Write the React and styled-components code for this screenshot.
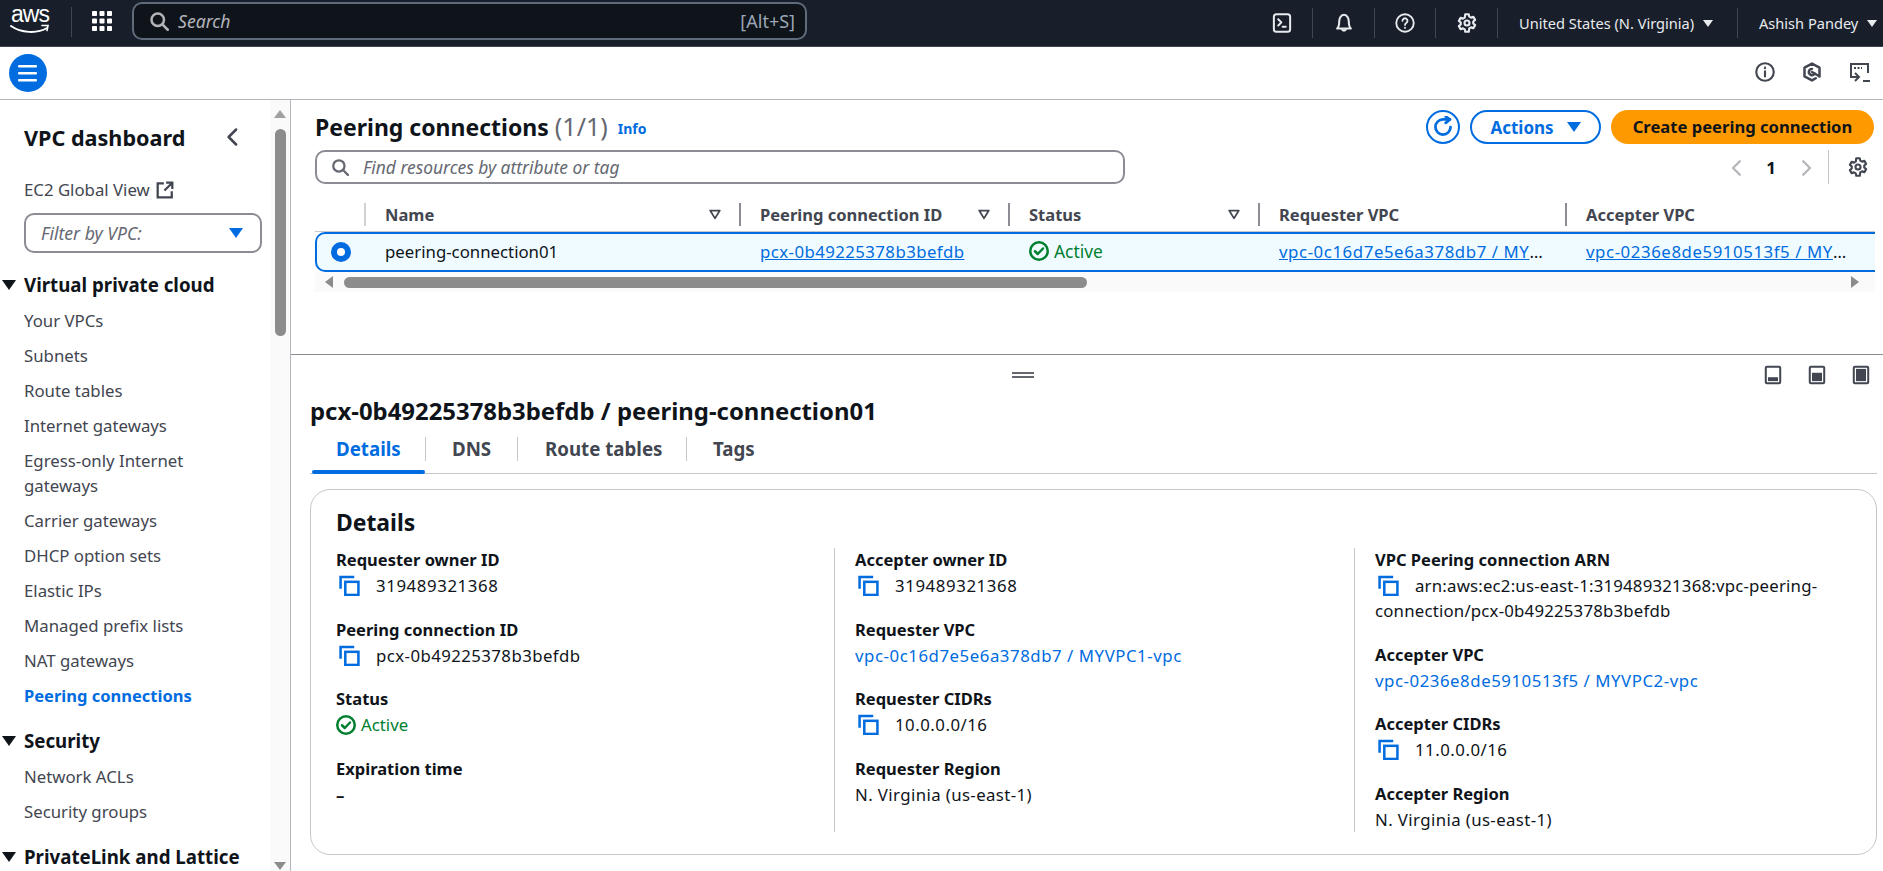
import React from "react";
import styled, { createGlobalStyle } from "styled-components";

const Global = createGlobalStyle`
  html, body { margin: 0; padding: 0; height: 871px; overflow: hidden; background: #fff; }
  body { font-family: "Noto Sans", "Open Sans", sans-serif; font-size: 16.8px; color: #0f141a; }
  * { box-sizing: border-box; }
`;

const Page = styled.div`width: 1883px; height: 871px; display: flex; flex-direction: column; overflow: hidden;`;
const TopBar = styled.header`height: 47px; background: #181f2b; border-bottom: 1px solid #414750; display: flex; align-items: center; color: #fff; flex: none;`;
const LogoBox = styled.div`width: 71px; align-self: flex-start; padding-left: 10px; display: flex; flex-direction: column;`;
const LogoText = styled.span`font-family: "Liberation Sans", sans-serif; font-size: 23px; line-height: 28px; letter-spacing: -1px; padding-left: 1px;`;
const LogoSmile = styled.svg`margin-top: -4px;`;
const BarDivider = styled.span`width: 1px; height: 30px; background: #414750; margin-bottom: 2px;`;
const GridWrap = styled.div`width: 60px; display: flex; justify-content: center; color: #fff; margin-bottom: 4px;`;
const SearchBox = styled.div`width: 675px; height: 38px; margin-bottom: 4px; background: #0f141a; border: 2px solid #5f6b7a; border-radius: 10px; display: flex; align-items: center; padding: 0 10px 0 15px; color: #b4b4bb; gap: 9px; font-size: 17.6px;`;
const SearchHint = styled.span`font-style: italic; flex: 1;`;
const Shortcut = styled.span`font-size: 18px; color: #9ba7b6;`;
const TopRight = styled.div`margin-left: auto; display: flex; align-items: center; height: 100%;`;
const TopCell = styled.div`width: ${p => p.$w}px; height: 30px; display: flex; align-items: center; justify-content: ${p => p.$text ? "flex-start" : "center"}; padding-left: ${p => p.$text ? p.$text : 0}px; border-left: ${p => p.$first ? "none" : "1px solid #414750"}; font-size: 14.6px; gap: 9px; color: #e8ebee; white-space: nowrap;`;
const SubBar = styled.div`height: 53px; border-bottom: 1px solid #b4b4bb; display: flex; align-items: center; padding: 0 12px 0 9px; flex: none;`;
const MenuBtn = styled.div`width: 38px; height: 38px; border-radius: 50%; background: #006ce0; display: flex; align-items: center; justify-content: center;`;
const SubIcons = styled.div`margin-left: auto; display: flex; gap: 27px; color: #424650;`;
const Body = styled.div`flex: 1; display: flex; min-height: 0;`;

const Sidebar = styled.aside`width: 291px; flex: none; border-right: 1px solid #b4b4bb; display: flex; overflow: hidden;`;
const NavInner = styled.nav`width: 270px; padding: 0 0 0 24px; flex: none; color: #424650;`;
const NavHead = styled.div`display: flex; align-items: center; justify-content: space-between; height: 30px; margin-top: 22px; padding-right: 27px;`;
const NavTitle = styled.h2`margin: 0; font-size: 21.6px; font-weight: 700; color: #0f141a;`;
const GlobalLink = styled.div`margin-top: 25px; height: 25px; line-height: 25px; display: flex; align-items: center; gap: 6px;`;
const FilterBox = styled.div`margin: 11px 8px 0 0; height: 40px; border: 2px solid #8c8c94; border-radius: 10px; display: flex; align-items: center; justify-content: space-between; padding: 0 17px 0 15px; font-style: italic; color: #656871; font-size: 17.6px;`;
const SectionTitle = styled.div`position: relative; font-weight: 700; font-size: 18.7px; line-height: 25px; color: #0f141a; margin-top: ${p => p.$mt}px;`;
const SectionCaret = styled.span`position: absolute; left: -22px; top: 8px; width: 0; height: 0; border-left: 7px solid transparent; border-right: 7px solid transparent; border-top: 10px solid #0f141a;`;
const NavItem = styled.div`padding: 5px 25px 5px 0; line-height: 25px; color: ${p => p.$active ? "#006ce0" : "#424650"}; font-weight: ${p => p.$active ? 700 : 400}; font-size: ${p => p.$active ? 16.5 : 16.8}px;`;
const NavGroup = styled.div`margin-top: ${p => p.$mt || 0}px;`;
const ScrollV = styled.div`width: 20px; flex: none; background: #fafafa; display: flex; flex-direction: column; align-items: center; padding-top: 10px;`;
const ScrollThumbV = styled.div`width: 11px; height: 207px; margin-top: 11px; background: #8c8c8c; border-radius: 6px;`;
const ArrowUp = styled.span`width: 0; height: 0; border-left: 6px solid transparent; border-right: 6px solid transparent; border-bottom: 8px solid #a0a0a0;`;
const ArrowDown = styled.span`margin-top: auto; margin-bottom: 1px; width: 0; height: 0; border-left: 6px solid transparent; border-right: 6px solid transparent; border-top: 8px solid #8c8c8c;`;

const Main = styled.main`flex: 1; display: flex; flex-direction: column; min-width: 0;`;
const TopPanel = styled.section`height: 255px; flex: none; border-bottom: 1px solid #8c8c94; padding: 10px 8px 0 24px;`;
const HeaderRow = styled.div`display: flex; align-items: center; height: 34px;`;
const PageTitle = styled.h1`margin: 0; padding-bottom: 2px; font-size: 23px; font-weight: 700; white-space: nowrap;`;
const Count = styled.span`font-weight: 400; font-size: 25px; color: #656871;`;
const InfoLink = styled.a`font-size: 14px; font-weight: 700; color: #006ce0; margin-left: 10px; padding-top: 2px;`;
const Actions = styled.div`margin-left: auto; margin-right: 1px; display: flex; align-items: center; gap: 10px;`;
const RoundBtn = styled.div`width: 34px; height: 34px; border: 2px solid #006ce0; border-radius: 50%; display: flex; align-items: center; justify-content: center; color: #006ce0;`;
const OutlineBtn = styled.div`width: 131px; height: 34px; border: 2px solid #006ce0; border-radius: 17px; color: #006ce0; font-weight: 700; font-size: 17px; display: flex; align-items: center; justify-content: center; gap: 13px;`;
const BtnCaret = styled.span`width: 0; height: 0; border-left: 7px solid transparent; border-right: 7px solid transparent; border-top: 10px solid #006ce0;`;
const PrimaryBtn = styled.div`width: 263px; height: 34px; padding-bottom: 1px; border-radius: 17px; background: #ff9900; color: #0f141a; font-weight: 700; font-size: 16.6px; display: flex; align-items: center; justify-content: center;`;
const Toolbar = styled.div`display: flex; align-items: center; margin-top: 6px; height: 34px;`;
const TableSearch = styled.div`width: 810px; height: 34px; border: 2px solid #8c8c94; border-radius: 10px; display: flex; align-items: center; gap: 14px; padding-left: 14px; color: #656871; font-style: italic; font-size: 17.4px;`;
const Pager = styled.div`margin-left: auto; margin-right: 7px; display: flex; align-items: center; height: 34px; font-weight: 700; color: #0f141a;`;
const PageNum = styled.span`width: 34px; text-align: center; margin: 0 9px 0 8px;`;
const PagerSep = styled.span`width: 1px; height: 34px; background: #c6c6cd; margin: 0 19px 0 13px;`;
const PagerChevron = styled.span`color: #b4b4bb; display: flex; padding-top: 2px;`;
const PagerGear = styled.span`color: #424650; display: flex;`;
const TableGrid = styled.div`display: grid; grid-template-columns: 49px 375px 269px 250px 307px 1fr;`;
const HeadRow = styled(TableGrid)`height: 32px; margin-top: 15px; align-items: center; padding-bottom: 1px;`;
const HeadCell = styled.div`height: 23px; line-height: 23px; padding: 0 17px 1px 19px; display: flex; align-items: center; justify-content: space-between; font-weight: 700; font-size: 16.5px; color: #424650; border-left: 2px solid ${p => p.$light ? "#d0d0d5" : "#8c8c94"};`;
const HeadBlank = styled.div``;
const HeadRule = styled.div`height: 1px; background: #c6c6cd;`;
const DataRow = styled(TableGrid)`height: 40px; background: #f0fbff; border: 2px solid #006ce0; border-right: 0; border-radius: 10px 0 0 10px; align-items: center; grid-template-columns: 47px 375px 269px 250px 307px 1fr;`;
const RadioCell = styled.div`padding-left: 14px; display: flex;`;
const Radio = styled.span`width: 20px; height: 20px; border-radius: 50%; border: 6px solid #006ce0; background: #fff;`;
const DataCell = styled.div`padding: 0 0 2px 21px; white-space: nowrap; font-size: 16.8px;`;
const Link = styled.a`color: #006ce0; letter-spacing: ${p => p.$ls || 0}px; text-decoration: ${p => p.$plain ? "none" : "underline"};`;
const ScrollH = styled.div`height: 20px; background: #fafafa; display: flex; align-items: center; padding: 0 16px 0 10px;`;
const ThumbH = styled.div`width: 743px; height: 11px; margin-left: 11px; background: #8c8c8c; border-radius: 6px;`;
const ArrowLeft = styled.span`width: 0; height: 0; border-top: 6px solid transparent; border-bottom: 6px solid transparent; border-right: 8px solid #8c8c8c;`;
const ArrowRight = styled.span`margin-left: auto; width: 0; height: 0; border-top: 6px solid transparent; border-bottom: 6px solid transparent; border-left: 8px solid #8c8c8c;`;

const Bottom = styled.section`flex: 1; padding: 0 6px 0 19px; min-height: 0;`;
const Handle = styled.div`height: 36px; display: flex; align-items: center; position: relative;`;
const Grip = styled.div`margin: 3px auto 0 702px; width: 22px; height: 6px; border-top: 2px solid #656871; border-bottom: 2px solid #656871;`;
const PanelIcons = styled.div`position: absolute; right: 6px; top: 10px; display: flex; gap: 24px; color: #424650;`;
const DetailTitle = styled.h2`margin: 5px 0 0; font-size: 23.9px; line-height: 30px; font-weight: 700; white-space: nowrap;`;
const Tabs = styled.div`display: flex; height: 42px; margin-top: 6px; border-bottom: 1px solid #c6c6cd; align-items: stretch;`;
const Tab = styled.div`position: relative; display: flex; align-items: flex-start; padding-top: 4px; height: 41px; font-weight: 700; font-size: 18.7px; color: ${p => p.$active ? "#006ce0" : "#424650"}; width: ${p => p.$w}px; padding-left: ${p => p.$pl}px;
  &::after { content: ""; position: absolute; right: 0; top: 5px; height: 24px; width: 1px; background: ${p => p.$last ? "transparent" : "#c6c6cd"}; }
  ${p => p.$active && `&::before { content: ""; position: absolute; left: 2px; right: 1px; bottom: -1px; height: 4px; border-radius: 2px; background: #006ce0; }`}`;
const Card = styled.div`margin-top: 15px; height: 366px; border: 1px solid #c6c6cd; border-radius: 20px; padding: 18px 20px 0 26px;`;
const CardTitle = styled.h3`margin: 0 0 0 -1px; font-size: 22.9px; line-height: 30px; font-weight: 700;`;
const Columns = styled.div`display: grid; grid-template-columns: 499px 520px 1fr; margin: 10px 0 0 -1px; height: 282px;`;
const Column = styled.div`padding-left: ${p => p.$first ? 0 : 20}px; border-right: ${p => p.$last ? "none" : "1px solid #c6c6cd"}; display: flex; flex-direction: column; gap: 19.5px; padding-right: 20px;`;
const Field = styled.div`line-height: 25px; font-size: 16.8px;`;
const Label = styled.div`font-weight: 700; font-size: 16.5px; line-height: 24px; margin-bottom: 1px;`;
const Value = styled.div`display: flex; align-items: flex-start; letter-spacing: ${p => p.$ls || 0}px;`;
const WrapValue = styled.div`line-height: 25px; letter-spacing: 0.2px;`;
const CopyWrap = styled.span`width: 40px; padding-left: 3px; flex: none; display: inline-flex; padding-top: 2px; height: 25px; color: #006ce0; vertical-align: top;`;
const ActiveText = styled.span`display: flex; height: 25px; align-items: center; gap: 5px; color: #00802f; font-size: ${p => p.$size || 16.8}px;`;
const Dash = styled.div`height: 25px; font-weight: 700;`;

const Svg = ({ size = 20, w, h, children, sw = 2, vb }) => (
  <svg width={w || size} height={h || size} viewBox={vb || "0 0 16 16"} fill="none" stroke="currentColor" strokeWidth={sw} strokeLinecap="round" strokeLinejoin="round">{children}</svg>
);
const SearchIcon = ({ s = 20 }) => <Svg size={s}><circle cx="7" cy="7" r="5" /><path d="M10.700 10.700 15 15" /></Svg>;
const Gear = ({ s = 20 }) => (
  <Svg size={s} sw={1.7}><circle cx="8" cy="8" r="2" /><path d="M6.600 1h2.800l.4 1.900 1.400.8 1.900-.6 1.400 2.400-1.500 1.300v1.600l1.500 1.300-1.400 2.400-1.900-.6-1.400.8L9.400 15H6.600l-.4-1.900-1.400-.8-1.900.6-1.400-2.400L3 9.200V7.600L1.500 6.300l1.400-2.400 1.900.6 1.400-.8z" /></Svg>
);
const Copy = () => (
  <Svg size={21} vb="0 0 20 20" sw={2.4}><g style={{ strokeLinecap: "butt", strokeLinejoin: "miter" }}><path d="M1.500 13V2h13" /><rect x="6" y="6.500" width="12.500" height="12.500" /></g></Svg>
);
const CheckCircle = () => <Svg size={20}><circle cx="8" cy="8" r="7" /><path d="m4.800 8.200 2.200 2.200 4.200-4.400" /></Svg>;
const FilterTri = () => <Svg size={14} sw={2}><path d="M2.500 4h11L8 13z" /></Svg>;
const Caret = styled.span`display: inline-block; width: 0; height: 0; border-left: 5px solid transparent; border-right: 5px solid transparent; border-top: 7px solid #e8ebee;`;
const FilterCaret = styled.span`width: 0; height: 0; border-left: 7px solid transparent; border-right: 7px solid transparent; border-top: 10px solid #006ce0;`;

const Copyable = ({ children, ls }) => <Value $ls={ls}><CopyWrap><Copy /></CopyWrap><span>{children}</span></Value>;

const PanelIcon = ({ kind }) => (
  <svg width="20" height="20" viewBox="0 0 16 18" fill="none" stroke="currentColor" strokeWidth="1.8">
    <rect x="1.500" y="1.500" width="13" height="15" rx="1" />
    <rect x={3.5} y={kind === "top" ? 3.5 : kind === "mid" ? 7 : 11} width="9" height={kind === "top" ? 11 : kind === "mid" ? 7.5 : 3.5} fill="currentColor" stroke="none" />
  </svg>
);

const nav1 = ["Your VPCs", "Subnets", "Route tables", "Internet gateways", "Egress-only Internet gateways", "Carrier gateways", "DHCP option sets", "Elastic IPs", "Managed prefix lists", "NAT gateways"];

export default function App() {
  return (
    <Page>
      <Global />
      <TopBar>
        <LogoBox>
          <LogoText>aws</LogoText>
          <LogoSmile width="40" height="11" viewBox="0 0 40 11" fill="none" stroke="#fff" strokeWidth="2" strokeLinecap="round"><path d="M1 2c10 7 26 8 36 2" /><path d="M32 1.500h6l-1 5" strokeWidth="1.600" /></LogoSmile>
        </LogoBox>
        <BarDivider />
        <GridWrap>
          <svg width="20" height="20" viewBox="0 0 20 20" fill="#fff">
            {[0, 7.5, 15].flatMap(y => [0, 7.5, 15].map(x => <rect key={`${x}-${y}`} x={x} y={y} width="5" height="5" rx="0.8" />))}
          </svg>
        </GridWrap>
        <SearchBox>
          <SearchIcon />
          <SearchHint>Search</SearchHint>
          <Shortcut>[Alt+S]</Shortcut>
        </SearchBox>
        <TopRight>
          <TopCell $first $w={60}>
            <Svg size={20} sw={1.6}><rect x="1.500" y="1" width="13" height="14" rx="2" /><path d="m5 5 2.500 2.500L5 10M8.500 11h2.500" /></Svg>
          </TopCell>
          <TopCell $w={62}>
            <Svg size={22} sw={1.5}><path d="M3 12h10c-1.300-1.200-1.500-3-1.500-5S10.500 2 8 2 4.500 5 4.500 7 4.300 10.800 3 12z" /><path d="M6.500 12.500a1.600 1.600 0 0 0 3 0" /></Svg>
          </TopCell>
          <TopCell $w={61}>
            <Svg size={20} sw={1.5}><circle cx="8" cy="8" r="7" /><path d="M6 6.200a2 2 0 1 1 3 1.800c-.7.400-1 .8-1 1.500M8 11.700v.2" /></Svg>
          </TopCell>
          <TopCell $w={62}><Gear /></TopCell>
          <TopCell $w={240} $text={21}>United States (N. Virginia) <Caret /></TopCell>
          <TopCell $w={146} $text={21}>Ashish Pandey <Caret /></TopCell>
        </TopRight>
      </TopBar>
      <SubBar>
        <MenuBtn>
          <svg width="20" height="18" viewBox="0 0 20 18" fill="#fff"><rect y="1" width="19" height="2.500" rx="1" /><rect y="8" width="19" height="2.500" rx="1" /><rect y="15" width="19" height="2.500" rx="1" /></svg>
        </MenuBtn>
        <SubIcons>
          <Svg size={20} sw={1.7}><circle cx="8" cy="8" r="7" /><path d="M8 7.500v4M8 4.500v.4" /></Svg>
          <Svg size={20} sw={2}><path d="M11 13 8 14.700 2 11.500v-7L8 1.300l6 3.200v7" /><path d="M8 5.500a2.500 2.500 0 1 0 2.200 3.700" /><path d="M8 8l5.500 3.200" /></Svg>
          <svg width="22" height="22" viewBox="0 0 22 22" fill="none" stroke="currentColor" strokeWidth="2"><path d="M9 15H2V2h17v9" /><path d="m6 11 4 4-4 4M14 19h7" /><path d="M5 6h8" strokeDasharray="2 1.500" /></svg>
        </SubIcons>
      </SubBar>
      <Body>
        <Sidebar>
          <NavInner>
            <NavHead>
              <NavTitle>VPC dashboard</NavTitle>
              <Svg size={20} sw={2}><path d="M10.500 2 4.500 8l6 6" /></Svg>
            </NavHead>
            <GlobalLink>EC2 Global View
              <Svg size={18} sw={2}><g style={{ strokeLinecap: "butt", strokeLinejoin: "miter" }}><path d="M7 2H1.500v12.500H14V9M9 1.500h5.500V7M14.500 1.500 7.500 8.500" /></g></Svg>
            </GlobalLink>
            <FilterBox>Filter by VPC:<FilterCaret /></FilterBox>
            <SectionTitle $mt={19}><SectionCaret />Virtual private cloud</SectionTitle>
            <NavGroup $mt={6}>
              {nav1.map(t => <NavItem key={t}>{t}</NavItem>)}
              <NavItem $active>Peering connections</NavItem>
            </NavGroup>
            <SectionTitle $mt={15}><SectionCaret />Security</SectionTitle>
            <NavGroup $mt={6}>
              <NavItem>Network ACLs</NavItem>
              <NavItem>Security groups</NavItem>
            </NavGroup>
            <SectionTitle $mt={15}><SectionCaret />PrivateLink and Lattice</SectionTitle>
          </NavInner>
          <ScrollV><ArrowUp /><ScrollThumbV /><ArrowDown /></ScrollV>
        </Sidebar>
        <Main>
          <TopPanel>
            <HeaderRow>
              <PageTitle>Peering connections <Count>(1/1)</Count></PageTitle>
              <InfoLink>Info</InfoLink>
              <Actions>
                <RoundBtn>
                  <Svg size={22} sw={2}><path d="M13.500 8A5.500 5.500 0 1 1 8 2.500h5" /><path d="M10 .5 13 2.500 10 5" /></Svg>
                </RoundBtn>
                <OutlineBtn>Actions<BtnCaret /></OutlineBtn>
                <PrimaryBtn>Create peering connection</PrimaryBtn>
              </Actions>
            </HeaderRow>
            <Toolbar>
              <TableSearch><SearchIcon s={18} />Find resources by attribute or tag</TableSearch>
              <Pager>
                <PagerChevron><Svg size={18} sw={2}><path d="M10.500 2 4.500 8l6 6" /></Svg></PagerChevron>
                <PageNum>1</PageNum>
                <PagerChevron><Svg size={18} sw={2}><path d="m5.500 2 6 6-6 6" /></Svg></PagerChevron>
                <PagerSep />
                <PagerGear><Gear /></PagerGear>
              </Pager>
            </Toolbar>
            <HeadRow>
              <HeadBlank />
              <HeadCell $light>Name <FilterTri /></HeadCell>
              <HeadCell>Peering connection ID <FilterTri /></HeadCell>
              <HeadCell>Status <FilterTri /></HeadCell>
              <HeadCell>Requester VPC</HeadCell>
              <HeadCell>Accepter VPC</HeadCell>
            </HeadRow>
            <HeadRule />
            <DataRow>
              <RadioCell><Radio /></RadioCell>
              <DataCell>peering-connection01</DataCell>
              <DataCell><Link $ls={0.43}>pcx-0b49225378b3befdb</Link></DataCell>
              <DataCell><ActiveText $size={17.4}><CheckCircle />Active</ActiveText></DataCell>
              <DataCell><Link $ls={0.58}>vpc-0c16d7e5e6a378db7 / MY</Link>…</DataCell>
              <DataCell><Link $ls={0.58}>vpc-0236e8de5910513f5 / MY</Link>…</DataCell>
            </DataRow>
            <ScrollH><ArrowLeft /><ThumbH /><ArrowRight /></ScrollH>
          </TopPanel>
          <Bottom>
            <Handle>
              <Grip />
              <PanelIcons><PanelIcon kind="low" /><PanelIcon kind="mid" /><PanelIcon kind="top" /></PanelIcons>
            </Handle>
            <DetailTitle>pcx-0b49225378b3befdb / peering-connection01</DetailTitle>
            <Tabs>
              <Tab $active $w={116} $pl={26}>Details</Tab>
              <Tab $w={92} $pl={26}>DNS</Tab>
              <Tab $w={169} $pl={27}>Route tables</Tab>
              <Tab $last $w={100} $pl={26}>Tags</Tab>
            </Tabs>
            <Card>
              <CardTitle>Details</CardTitle>
              <Columns>
                <Column $first>
                  <Field><Label>Requester owner ID</Label><Copyable ls={0.6}>319489321368</Copyable></Field>
                  <Field><Label>Peering connection ID</Label><Copyable ls={0.43}>pcx-0b49225378b3befdb</Copyable></Field>
                  <Field><Label>Status</Label><ActiveText><CheckCircle />Active</ActiveText></Field>
                  <Field><Label>Expiration time</Label><Dash>–</Dash></Field>
                </Column>
                <Column>
                  <Field><Label>Accepter owner ID</Label><Copyable ls={0.6}>319489321368</Copyable></Field>
                  <Field><Label>Requester VPC</Label><Value><Link $plain $ls={0.55}>vpc-0c16d7e5e6a378db7 / MYVPC1-vpc</Link></Value></Field>
                  <Field><Label>Requester CIDRs</Label><Copyable ls={0.5}>10.0.0.0/16</Copyable></Field>
                  <Field><Label>Requester Region</Label><Value $ls={0.4}>N. Virginia (us-east-1)</Value></Field>
                </Column>
                <Column $last>
                  <Field><Label>VPC Peering connection ARN</Label><WrapValue><CopyWrap><Copy /></CopyWrap>arn:aws:ec2:us-east-1:319489321368:vpc-peering-connection/pcx-0b49225378b3befdb</WrapValue></Field>
                  <Field><Label>Accepter VPC</Label><Value><Link $plain $ls={0.55}>vpc-0236e8de5910513f5 / MYVPC2-vpc</Link></Value></Field>
                  <Field><Label>Accepter CIDRs</Label><Copyable ls={0.5}>11.0.0.0/16</Copyable></Field>
                  <Field><Label>Accepter Region</Label><Value $ls={0.4}>N. Virginia (us-east-1)</Value></Field>
                </Column>
              </Columns>
            </Card>
          </Bottom>
        </Main>
      </Body>
    </Page>
  );
}
